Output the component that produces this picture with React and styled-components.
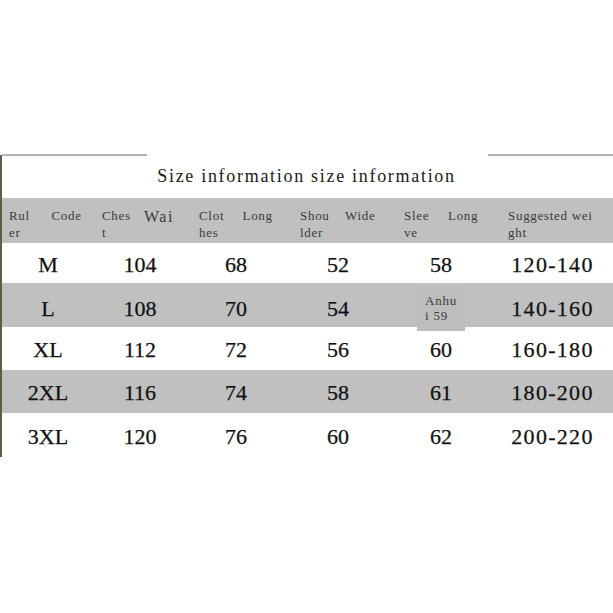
import React from "react";
import styled, { createGlobalStyle } from "styled-components";

const Global = createGlobalStyle`
  html, body { margin: 0; padding: 0; background: #fff; }
  body { width: 613px; height: 613px; overflow: hidden; }
`;

const Page = styled.div`
  width: 613px;
  height: 613px;
  padding-top: 155px;
  box-sizing: border-box;
  background: #fff;
`;

const Sheet = styled.div`
  border-left: 2px solid #5c5e48;
  width: 611px;
`;

const TitleRow = styled.div`
  height: 43px;
  display: grid;
  grid-template-columns: 145px 1fr 125px;
  align-items: start;
`;

const Rule = styled.div`
  border-top: 2px solid #b4b4b4;
  height: 0;
  margin-top: -1px;
`;

const Title = styled.div`
  font-family: "Liberation Serif", serif;
  font-size: 18px;
  letter-spacing: 1.7px;
  color: #1a1a1a;
  text-align: center;
  line-height: 43px;
  white-space: nowrap;
  padding-right: 22px;
`;

const Row = styled.div`
  display: grid;
  grid-template-columns: 92px 92px 100px 104px 102px 121px;
  height: ${(p) => p.$h}px;
  background: ${(p) => (p.$shade ? "#c0c0c0" : "#fff")};
`;

const HeadCell = styled.div`
  display: flex;
  align-items: flex-start;
  padding-top: 9px;
  padding-left: ${(p) => p.$pad}px;
`;

const HeadLabel = styled.div`
  width: ${(p) => p.$w || 45}px;
  font-family: "Liberation Serif", serif;
  font-size: ${(p) => (p.$big ? 16 : 13)}px;
  letter-spacing: ${(p) => (p.$big ? "1.5px" : "0.7px")};
  line-height: 17px;
  color: #3a3a3a;
  white-space: pre;
  margin-top: ${(p) => (p.$big ? 1 : 0)}px;
`;

const Cell = styled.div`
  display: flex;
  align-items: center;
  justify-content: center;
  padding-top: 3px;
  font-family: "Liberation Serif", serif;
  font-size: 22px;
  letter-spacing: ${(p) => (p.$spaced ? "1.3px" : "0")};
  color: #111;
  -webkit-text-stroke: 0.25px #111;
`;

const NoteCell = styled.div`
  display: flex;
  align-items: center;
  justify-content: center;
`;

const Note = styled.div`
  font-family: "Liberation Serif", serif;
  font-size: 13px;
  letter-spacing: 0.8px;
  line-height: 15px;
  color: #3a3a3a;
  white-space: pre;
  background: #bdbdbd;
  padding: 6px 8px 8px;
  margin-top: 4px;
`;

const headers = [
  { pad: 7, labels: [{ t: "Rul\ner" }, { t: "Code" }] },
  { pad: 8, labels: [{ t: "Ches\nt" }, { t: "Wai", big: true }] },
  { pad: 13, labels: [{ t: "Clot\nhes" }, { t: "Long" }] },
  { pad: 14, labels: [{ t: "Shou\nlder" }, { t: "Wide" }] },
  { pad: 14, labels: [{ t: "Slee\nve" }, { t: "Long" }] },
  { pad: 16, labels: [{ t: "Suggested wei\nght", w: 105 }] },
];

const rows = [
  ["M", "104", "68", "52", "58", "120-140"],
  ["L", "108", "70", "54", null, "140-160"],
  ["XL", "112", "72", "56", "60", "160-180"],
  ["2XL", "116", "74", "58", "61", "180-200"],
  ["3XL", "120", "76", "60", "62", "200-220"],
];

const heights = [40, 44, 43, 43, 44];

export default function App() {
  return (
    <Page>
      <Global />
      <Sheet>
        <TitleRow>
          <Rule />
          <Title>Size information size information</Title>
          <Rule />
        </TitleRow>
        <Row $shade $h={45}>
          {headers.map((h, i) => (
            <HeadCell key={i} $pad={h.pad}>
              {h.labels.map((l, j) => (
                <HeadLabel key={j} $big={l.big} $w={l.w}>
                  {l.t}
                </HeadLabel>
              ))}
            </HeadCell>
          ))}
        </Row>
        {rows.map((r, i) => (
          <Row key={i} $shade={i % 2 === 1} $h={heights[i]}>
            {r.map((v, j) =>
              v === null ? (
                <NoteCell key={j}>
                  <Note>{"Anhu\ni 59"}</Note>
                </NoteCell>
              ) : (
                <Cell key={j} $spaced={j === 5}>
                  {v}
                </Cell>
              )
            )}
          </Row>
        ))}
      </Sheet>
    </Page>
  );
}
